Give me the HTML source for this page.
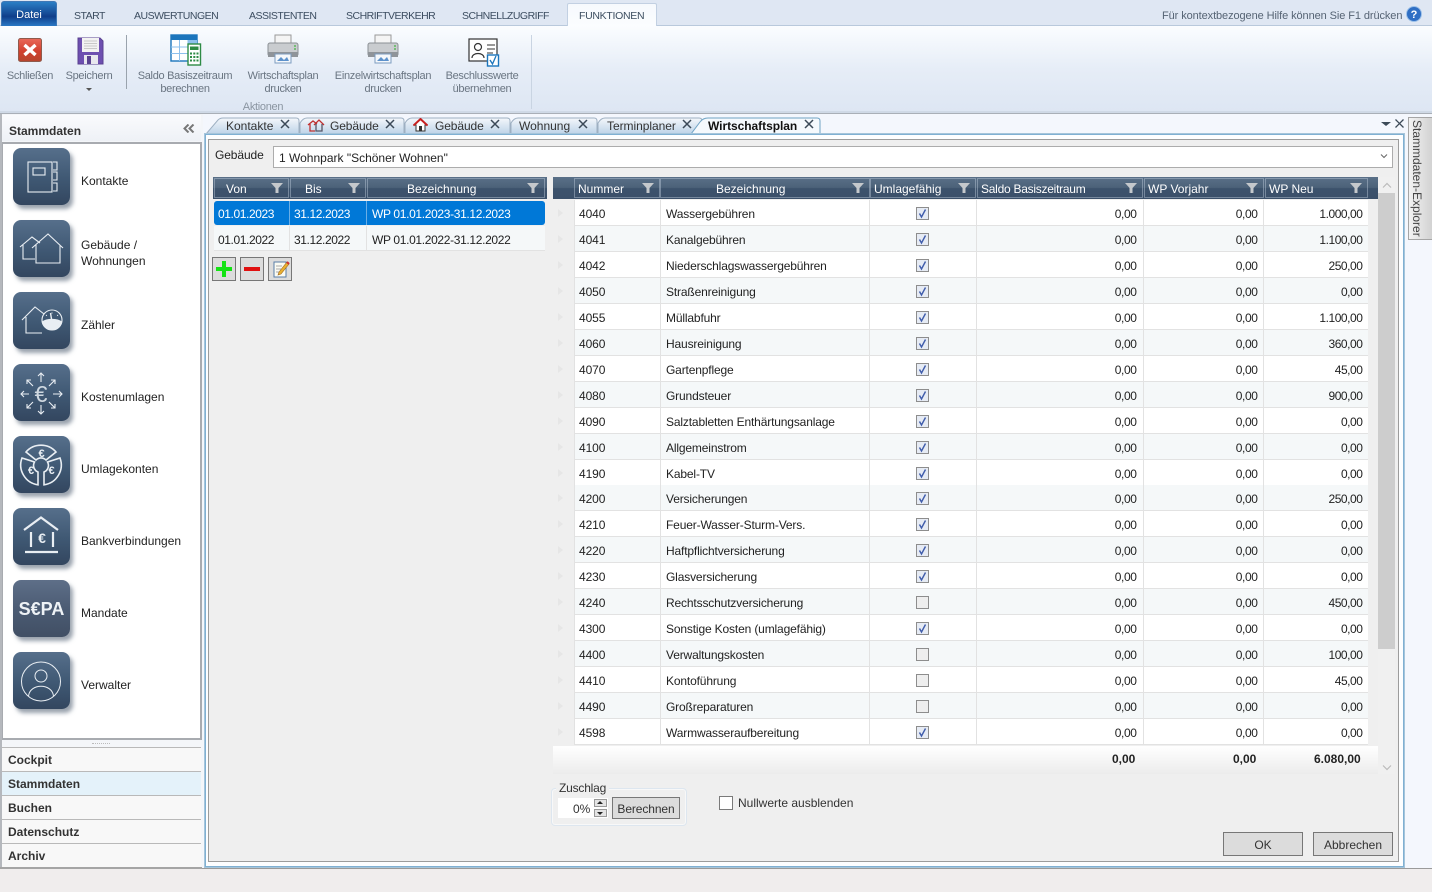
<!DOCTYPE html>
<html lang="de"><head><meta charset="utf-8"><title>Wirtschaftsplan</title>
<style>
html,body{margin:0;padding:0}
body{width:1432px;height:892px;overflow:hidden;position:relative;background:#f0eded;font:12px/16px "Liberation Sans",sans-serif;color:#222}
.a,.t{position:absolute}
.t{white-space:nowrap}
.top{font-size:10.5px;letter-spacing:-.5px;color:#3c4d60;top:8px}
.rb{font-size:11px;letter-spacing:-.3px;line-height:13px;color:#6a7582;text-align:center;white-space:nowrap;position:absolute}
.side{left:81px;color:#222;font-size:12px;line-height:16px}
.ib{position:absolute;left:13px;width:57px;height:57px;border-radius:8px;background:linear-gradient(#566f8b,#3f5873 55%,#33465f);box-shadow:3px 4px 4px rgba(70,85,105,.55);border:0}
.ib svg{position:absolute;left:0;top:0;fill:none;stroke:#e9eef3;stroke-width:1.1}
.nav{position:absolute;left:2px;width:199px;height:23px;border-bottom:1px solid #b9b9b9;background:#f8f8f8;font-weight:bold;font-size:12px;line-height:25px;text-indent:6px;color:#333}
.hd{position:absolute;top:177px;height:22px;background:linear-gradient(#5a7088,#4c6279 48%,#3c526c 52%,#3b506a)}
.hc{position:absolute;top:178px;height:20px;border:1px solid rgba(190,205,220,.45);color:#fff;font-size:12px;line-height:21px;box-sizing:border-box}
.hc span{position:absolute;white-space:nowrap}
.hc svg{position:absolute;right:5px;top:4px}
.r{position:absolute;left:574px;width:794px;height:26px;border-bottom:1px solid #e2e2e2;box-sizing:border-box;background:#fff}
.r.o{background:#f5f8f9}
.r b{position:absolute;font-weight:normal;top:6px;white-space:nowrap;color:#222;font-size:12px;letter-spacing:-.15px}
.r .n{left:5px;letter-spacing:-.1px}.d{left:92px}
.r .s{right:231.5px;letter-spacing:-.4px}.r .v{right:110.5px;letter-spacing:-.4px}.r .w{right:5.5px;letter-spacing:-.45px}
.r svg{position:absolute;left:342px;top:7px}
.ar{position:absolute;left:558px;width:0;height:0;border-left:5px solid #e6e6e6;border-top:4px solid transparent;border-bottom:4px solid transparent}
.btn{position:absolute;background:#dcdcdc;border:1px solid #777;box-sizing:border-box;text-align:center;color:#333}
.tb{font-size:12px;top:118px;color:#333}
.x{position:absolute;top:119px}
.dt{letter-spacing:-.4px}.wp{letter-spacing:-.34px}
</style></head><body>
<svg width="0" height="0" style="position:absolute"><defs>
<symbol id="f" viewBox="0 0 12 10"><path d="M0 0H12L7.5 5V10H4.5V5Z" fill="#c4c8cc"/></symbol>
<symbol id="c" viewBox="0 0 13 13"><rect x=".5" y=".5" width="12" height="12" fill="#e6ebf4" stroke="#8d8d8d"/><path d="M3.5 6.5L5.5 10L9.5 2.5" fill="none" stroke="#3f5cab" stroke-width="1.4"/></symbol>
<symbol id="u" viewBox="0 0 13 13"><rect x=".5" y=".5" width="12" height="12" fill="#eee" stroke="#8d8d8d"/></symbol>
<symbol id="k" viewBox="0 0 10 10"><path d="M1 1L9 9M9 1L1 9" stroke="#3c4a58" stroke-width="1.5" fill="none"/></symbol>
<linearGradient id="tg" x1="0" y1="0" x2="0" y2="1"><stop offset="0" stop-color="#f4f7fb"/><stop offset="1" stop-color="#bdd3e8"/></linearGradient>
</defs></svg>

<!-- top strip -->
<div class="a" style="left:0;top:0;width:1432px;height:25px;background:#dfe7f3;border-bottom:1px solid #b9c9dc"></div>
<div class="a" style="left:1px;top:1px;width:54px;height:24px;border:1px solid #3f78b5;border-radius:3px 3px 0 0;background:linear-gradient(#2a7fc5,#174f9a 45%,#0f3e8a 60%,#2a78c4);color:#fff;font-size:11px;line-height:26px;text-align:center">Datei</div>
<div class="t top" style="left:74px">START</div>
<div class="t top" style="left:134px">AUSWERTUNGEN</div>
<div class="t top" style="left:249px">ASSISTENTEN</div>
<div class="t top" style="left:346px">SCHRIFTVERKEHR</div>
<div class="t top" style="left:462px">SCHNELLZUGRIFF</div>
<div class="a" style="left:567px;top:3px;width:90px;height:23px;background:linear-gradient(#f6f9fd,#fbfdff);border:1px solid #c2d0e2;border-bottom:0;border-radius:2px 2px 0 0;box-sizing:border-box"></div>
<div class="t top" style="left:579px;letter-spacing:-.3px">FUNKTIONEN</div>
<div class="t" style="left:1162px;top:8px;font-size:11px;letter-spacing:-.09px;color:#566474">Für kontextbezogene Hilfe können Sie F1 drücken</div>
<svg class="a" style="left:1406px;top:6px" width="16" height="16"><circle cx="8" cy="8" r="7.5" fill="#2f6fc4" stroke="#9cc0e8"/><text x="8" y="12" font-size="11" font-weight="bold" fill="#fff" text-anchor="middle" font-family="Liberation Sans">?</text></svg>

<!-- ribbon -->
<div class="a" style="left:0;top:26px;width:1432px;height:86px;background:linear-gradient(#fbfdff,#e6edf7 50%,#dde6f3)"></div>
<div class="a" style="left:0;top:111px;width:1432px;height:2px;background:#cfd9e6"></div>
<div class="a" style="left:0;top:113px;width:1432px;height:1px;background:#a9afb7"></div>
<div class="a" style="left:126px;top:35px;width:1px;height:54px;background:#9aa3ad"></div>
<div class="a" style="left:531px;top:35px;width:1px;height:74px;background:#c9d4e2"></div>

<svg class="a" style="left:17px;top:37px" width="26" height="26"><defs><linearGradient id="rg" x1="0" y1="0" x2="0" y2="1"><stop offset="0" stop-color="#e9695a"/><stop offset=".55" stop-color="#d2402f"/><stop offset="1" stop-color="#b5452e"/></linearGradient></defs><rect x="1.5" y="1.5" width="23" height="23" rx="2" fill="url(#rg)" stroke="#8f5a4c"/><path d="M7.5 8L18.5 18M18.5 8L7.5 18" stroke="#fff" stroke-width="3.4"/></svg>
<svg class="a" style="left:77px;top:37px" width="27" height="28"><path d="M1 1H23L26 4V27H1Z" fill="#6d4fb0" stroke="#5a4290"/><rect x="5" y="1" width="17" height="14" fill="#f2f2f2"/><path d="M7 4H20M7 6.500H20M7 9H20M7 11.500H20" stroke="#c8c8c8"/><rect x="7" y="18" width="14" height="9" fill="#e8e8ee"/><rect x="10" y="19" width="4" height="8" fill="#5a4290"/></svg>
<div class="rb" style="left:0;top:70px;width:60px">Schließen</div>
<div class="rb" style="left:59px;top:70px;width:60px">Speichern</div>
<div class="a" style="left:86px;top:88px;width:0;height:0;border-top:3px solid #555;border-left:3px solid transparent;border-right:3px solid transparent"></div>

<svg class="a" style="left:170px;top:33px" width="32" height="33"><rect x="1" y="2" width="26" height="26" fill="#fff" stroke="#1b75bc" stroke-width="1.4"/><rect x="1" y="2" width="26" height="5" fill="#1b75bc"/><rect x="18" y="7" width="9" height="7" fill="#8dc0ec"/><path d="M1 14H27M1 20.500H27M9.500 7V28M18 7V28" stroke="#8dc0ec"/><rect x="18" y="11" width="12.500" height="21" fill="#fff" stroke="#2e8b45" stroke-width="1.4"/><rect x="20" y="13.500" width="8.500" height="3.500" fill="#2e8b45"/><path d="M20 19.500h2v2h-2zM23.300 19.500h2v2h-2zM26.500 19.500h2v2h-2zM20 23h2v2h-2zM23.300 23h2v2h-2zM26.500 23h2v2h-2zM20 26.500h2v2h-2zM23.300 26.500h2v2h-2zM26.500 26.500h2v2h-2z" fill="#2e8b45"/></svg>
<div class="rb" style="left:125px;top:70px;width:120px">Saldo Basiszeitraum<br>berechnen</div>

<svg class="a" style="left:267px;top:34px" width="32" height="30"><rect x="8" y="1" width="16" height="10" fill="#f4f4f4" stroke="#999"/><rect x="1" y="9" width="30" height="13" rx="2" fill="#c9cccf" stroke="#8a8f94"/><rect x="1" y="18" width="30" height="5" fill="#8f9499"/><rect x="8" y="20" width="16" height="9" fill="#f5f8fb" stroke="#7d9dc0"/><path d="M10 27L14 23L17 26L20 23L22 27Z" fill="#5d92cc"/><path d="M27 12h2M27 15h2" stroke="#5bb85b" stroke-width="1.400"/></svg>
<div class="rb" style="left:223px;top:70px;width:120px">Wirtschaftsplan<br>drucken</div>
<svg class="a" style="left:367px;top:34px" width="32" height="30"><rect x="8" y="1" width="16" height="10" fill="#f4f4f4" stroke="#999"/><rect x="1" y="9" width="30" height="13" rx="2" fill="#c9cccf" stroke="#8a8f94"/><rect x="1" y="18" width="30" height="5" fill="#8f9499"/><rect x="8" y="20" width="16" height="9" fill="#f5f8fb" stroke="#7d9dc0"/><path d="M10 27L14 23L17 26L20 23L22 27Z" fill="#5d92cc"/><path d="M27 12h2M27 15h2" stroke="#5bb85b" stroke-width="1.400"/></svg>
<div class="rb" style="left:323px;top:70px;width:120px">Einzelwirtschaftsplan<br>drucken</div>
<svg class="a" style="left:468px;top:38px" width="32" height="29"><rect x="1" y="1" width="28" height="22" fill="#fff" stroke="#333" stroke-width="1.200"/><circle cx="10" cy="9" r="3.500" fill="none" stroke="#333" stroke-width="1.200"/><path d="M4 20C4 14 16 14 16 20" fill="none" stroke="#333" stroke-width="1.200"/><path d="M19 7H27M19 11H27M19 15H25" stroke="#333"/><rect x="19.500" y="17" width="11" height="11" fill="#fff" stroke="#1b75bc" stroke-width="1.400"/><path d="M22 22L24.500 26L28 18" fill="none" stroke="#1b75bc" stroke-width="1.300"/></svg>
<div class="rb" style="left:422px;top:70px;width:120px">Beschlusswerte<br>übernehmen</div>
<div class="rb" style="left:203px;top:101px;width:120px;color:#8a95a1">Aktionen</div>

<!-- middle background -->
<div class="a" style="left:0;top:114px;width:1432px;height:754px;background:#f4f7fd"></div>
<div class="a" style="left:0;top:868px;width:1432px;height:24px;background:#f0eded;border-top:1px solid #9a9a9a;box-sizing:border-box"></div>

<!-- left panel -->
<div class="a" style="left:0;top:114px;width:203px;height:754px;background:#f4f6f9;border-left:2px solid #b5b8bd;box-sizing:border-box"></div>
<div class="a" style="left:2px;top:115px;width:199px;height:26px;background:linear-gradient(#fafbfd,#eef1f6)"></div>
<div class="t" style="left:9px;top:123px;font-weight:bold;font-size:12px;color:#333">Stammdaten</div>
<svg class="a" style="left:183px;top:124px" width="12" height="9"><path d="M5.500 0.500L1.500 4.500L5.500 8.500M10.500 0.500L6.500 4.500L10.500 8.500" fill="none" stroke="#777" stroke-width="2"/></svg>
<div class="a" style="left:2px;top:142px;width:200px;height:598px;background:#fff;border:1px solid #a8abb0;border-width:2px 2px 2px 1px;box-sizing:border-box"></div>

<div class="ib" style="top:148px"><svg width="57" height="57"><rect x="15" y="14" width="24" height="30"/><rect x="20" y="20" width="12" height="7"/><path d="M40 14H44V22H40M40 24H44V32H40M40 35H44V43H40"/></svg></div>
<div class="t side" style="top:173px">Kontakte</div>
<div class="ib" style="top:220px"><svg width="57" height="57"><path d="M7 27L19 17L27 23M10 25V39H22"/><path d="M19 28L35 14L50 28M23 25V43H47V25"/></svg></div>
<div class="t side" style="top:237px">Gebäude /<br>Wohnungen</div>
<div class="ib" style="top:292px"><svg width="57" height="57"><path d="M9 28L22 15L31 22M13 25V41H29"/><circle cx="39" cy="28" r="10" fill="#3f5873"/><path d="M29.300 30A10 10 0 0 0 48.700 30C44 26.500 34 26.500 29.300 30Z" fill="#e9eef3"/><path d="M39 30L37.500 21" stroke-width="1.400"/><path d="M33 23L33.800 23.800M39 20.500V21.500M45 23L44.200 23.800" stroke-width="1"/></svg></div>
<div class="t side" style="top:317px">Zähler</div>
<div class="ib" style="top:364px"><svg width="57" height="57"><text x="28" y="38" font-size="23" fill="#e9eef3" fill-opacity=".85" stroke="none" text-anchor="middle" font-family="Liberation Sans">€</text><path d="M28 9V18M25 12L28 9L31 12M28 50V41M25 47L28 50L31 47M8 30H16M11 27L8 30L11 33M49 30H40M46 27L49 30L46 33M14 16L20 22M14 20V16H18M42 16L36 22M42 20V16H38M14 44L20 38M14 40V44H18M42 44L36 38M42 40V44H38"/></svg></div>
<div class="t side" style="top:389px">Kostenumlagen</div>
<div class="ib" style="top:436px"><svg width="57" height="57" stroke-width="1.600" style="stroke-width:1.600"><path d="M13 16A20 20 0 0 1 43 16L33 24A7 7 0 0 0 23 24Z"/><path d="M47 22A20 20 0 0 1 31 48.800L31 36A7 7 0 0 0 34.500 26Z"/><path d="M9 22A20 20 0 0 0 25 48.800L25 36A7 7 0 0 1 21.500 26Z"/><text x="28.500" y="21" font-size="11" font-weight="bold" fill="#e9eef3" stroke="none" text-anchor="middle" font-family="Liberation Sans">€</text><text x="18" y="38" font-size="11" font-weight="bold" fill="#e9eef3" stroke="none" text-anchor="middle" font-family="Liberation Sans">€</text><text x="38.500" y="38" font-size="11" font-weight="bold" fill="#e9eef3" stroke="none" text-anchor="middle" font-family="Liberation Sans">€</text></svg></div>
<div class="t side" style="top:461px">Umlagekonten</div>
<div class="ib" style="top:508px"><svg width="57" height="57" style="stroke-width:2.200"><path d="M11 22L28 9.500L45 22"/><path d="M18 24V39M40 24V39M12 44H45"/><text x="29" y="35" font-size="14" font-weight="bold" fill="#e9eef3" stroke="none" text-anchor="middle" font-family="Liberation Sans">€</text></svg></div>
<div class="t side" style="top:533px">Bankverbindungen</div>
<div class="ib" style="top:580px;background:linear-gradient(#5e6f88,#4a5a72 55%,#414f64)"><svg width="57" height="57"><text x="28.500" y="35" font-size="18" font-weight="bold" fill="#eef2f6" stroke="none" text-anchor="middle" font-family="Liberation Sans">S€PA</text></svg></div>
<div class="t side" style="top:605px">Mandate</div>
<div class="ib" style="top:652px"><svg width="57" height="57" style="stroke-width:1"><circle cx="28" cy="29.500" r="19.500"/><circle cx="28" cy="24" r="6"/><path d="M15.500 44C17 31 39 31 40.500 44"/></svg></div>
<div class="t side" style="top:677px">Verwalter</div>

<div class="a" style="left:92px;top:743px;width:18px;height:0;border-top:1px dotted #bbb"></div>
<div class="a" style="left:2px;top:747px;width:199px;height:1px;background:#b9b9b9"></div>
<div class="nav" style="top:748px">Cockpit</div>
<div class="nav" style="top:772px;background:#e4f2fa">Stammdaten</div>
<div class="nav" style="top:796px">Buchen</div>
<div class="nav" style="top:820px">Datenschutz</div>
<div class="nav" style="top:844px">Archiv</div>
<div class="a" style="left:0;top:867px;width:202px;height:2px;background:#a5a5a5"></div>

<!-- doc tabs -->
<svg class="a" style="left:203px;top:115px" width="625" height="22" fill="url(#tg)" stroke="#9eb0c2">
<path d="M3 19L15 5Q17 3 20 3H93Q96 3 96 6V19Z"/>
<path d="M97 19V8Q100 3 104 3H198Q201 3 201 6V19Z"/>
<path d="M202 19V8Q205 3 209 3H304Q307 3 307 6V19Z"/>
<path d="M308 19V8Q311 3 315 3H391Q394 3 394 6V19Z"/>
<path d="M395 19V8Q398 3 402 3H496Q499 3 499 6V19Z"/>
<path d="M488 19L497 7Q500 3 505 3H614Q617 3 617 6V19H488Z" fill="#f5f9fd" stroke="#6fa3c4"/>
</svg>
<div class="t tb" style="left:226px">Kontakte</div><svg class="x" style="left:280px" width="10" height="10"><use href="#k"/></svg>
<svg class="a" style="left:307px;top:118px" width="18" height="14" fill="none" stroke="#c03030" stroke-width="1.300"><path d="M1 7L6 3L10 6M3 6V13H8"/><path d="M7 7L12 2L17 7" /><path d="M9 6V13H15V6" stroke="#556"/></svg>
<div class="t tb" style="left:330px;letter-spacing:-.1px">Gebäude</div><svg class="x" style="left:385px" width="10" height="10"><use href="#k"/></svg>
<svg class="a" style="left:413px;top:118px" width="15" height="14"><path d="M7.500 1L14 7H12V13H3V7H1Z" fill="#fff" stroke="#333"/><path d="M0.500 7.500L7.500 1L14.500 7.500" fill="none" stroke="#c82020" stroke-width="2"/><rect x="6" y="8" width="3" height="5" fill="#333"/></svg>
<div class="t tb" style="left:435px;letter-spacing:-.1px">Gebäude</div><svg class="x" style="left:490px" width="10" height="10"><use href="#k"/></svg>
<div class="t tb" style="left:519px">Wohnung</div><svg class="x" style="left:578px" width="10" height="10"><use href="#k"/></svg>
<div class="t tb" style="left:607px;letter-spacing:-.05px">Terminplaner</div><svg class="x" style="left:682px" width="10" height="10"><use href="#k"/></svg>
<div class="t tb" style="left:708px;font-weight:bold;color:#111;letter-spacing:-.05px">Wirtschaftsplan</div><svg class="x" style="left:804px" width="10" height="10"><use href="#k"/></svg>
<div class="a" style="left:1381px;top:122px;width:0;height:0;border-top:4px solid #3c4a58;border-left:5px solid transparent;border-right:5px solid transparent"></div>
<svg class="a" style="left:1395px;top:119px" width="9" height="9"><path d="M.5 .5L8.500 8.500M8.500 .5L.5 8.500" stroke="#3c4a58" stroke-width="1.300"/></svg>

<!-- doc frame -->
<div class="a" style="left:204px;top:133px;width:1201px;height:735px;background:#fdfeff;border:2px solid #7fb0d3;box-sizing:border-box;outline:1px solid #a6c5da;outline-offset:-1px"></div>
<div class="a" style="left:208px;top:139px;width:1191px;height:723px;background:#efefef;border:1px solid #9c9c9c;box-sizing:border-box"></div>

<div class="t" style="left:215px;top:147px;color:#222;letter-spacing:-.1px">Gebäude</div>
<div class="a" style="left:273px;top:146px;width:1120px;height:22px;background:#fff;border:1px solid #acacac;box-sizing:border-box"></div>
<div class="t" style="left:279px;top:150px;color:#222">1 Wohnpark "Schöner Wohnen"</div>
<svg class="a" style="left:1380px;top:153px" width="8" height="6"><path d="M1 1.500L4 4.500L7 1.500" fill="none" stroke="#666"/></svg>

<!-- left grid -->
<div class="hd" style="left:213px;width:334px"></div>
<div class="hc" style="left:214px;width:75px"><span style="left:11px">Von</span><svg width="12" height="10"><use href="#f"/></svg></div>
<div class="hc" style="left:290px;width:76px"><span style="left:14px">Bis</span><svg width="12" height="10"><use href="#f"/></svg></div>
<div class="hc" style="left:367px;width:178px"><span style="left:39px">Bezeichnung</span><svg width="12" height="10"><use href="#f"/></svg></div>
<div class="a" style="left:214px;top:201px;width:331px;height:24px;background:#0078d7;border-radius:3px"></div>
<div class="a" style="left:289px;top:201px;width:1px;height:24px;background:#6aaee6"></div>
<div class="a" style="left:366px;top:201px;width:1px;height:24px;background:#6aaee6"></div>
<div class="t dt" style="left:218px;top:206px;color:#fff">01.01.2023</div>
<div class="t dt" style="left:294px;top:206px;color:#fff">31.12.2023</div>
<div class="t wp" style="left:372px;top:206px;color:#fff">WP 01.01.2023-31.12.2023</div>
<div class="a" style="left:214px;top:226px;width:331px;height:25px;background:#f5f8f9;border-bottom:1px solid #e2e2e2;box-sizing:border-box"></div>
<div class="a" style="left:289px;top:226px;width:1px;height:25px;background:#e2e2e2"></div>
<div class="a" style="left:366px;top:226px;width:1px;height:25px;background:#e2e2e2"></div>
<div class="t dt" style="left:218px;top:232px">01.01.2022</div>
<div class="t dt" style="left:294px;top:232px">31.12.2022</div>
<div class="t wp" style="left:372px;top:232px">WP 01.01.2022-31.12.2022</div>

<div class="btn" style="left:212px;top:257px;width:24px;height:24px"><svg width="22" height="22" style="display:block"><path d="M11 3V19M3 11H19" stroke="#14e314" stroke-width="4"/></svg></div>
<div class="btn" style="left:240px;top:257px;width:24px;height:24px"><svg width="22" height="22" style="display:block"><path d="M3 11H19" stroke="#e01010" stroke-width="4"/></svg></div>
<div class="btn" style="left:268px;top:257px;width:24px;height:24px"><svg width="22" height="22" style="display:block"><rect x="5" y="4" width="12" height="15" fill="#fbfbf2" stroke="#5a7ea8"/><path d="M7 8H13M7 11H12M7 14H11" stroke="#aaa"/><path d="M10 14L18 4L20 6L12 16L9 17Z" fill="#e8b030" stroke="#a06820" stroke-width=".6"/><path d="M18 4L20 6" stroke="#d03030" stroke-width="2"/></svg></div>

<!-- main grid -->
<div class="hd" style="left:553px;width:825px"></div>
<div class="hc" style="left:574px;width:86px"><span style="left:3px">Nummer</span><svg width="12" height="10"><use href="#f"/></svg></div>
<div class="hc" style="left:660px;width:210px"><span style="left:55px">Bezeichnung</span><svg width="12" height="10"><use href="#f"/></svg></div>
<div class="hc" style="left:870px;width:106px"><span style="left:3px">Umlagefähig</span><svg width="12" height="10"><use href="#f"/></svg></div>
<div class="hc" style="left:977px;width:166px"><span style="left:3px;letter-spacing:-.26px">Saldo Basiszeitraum</span><svg width="12" height="10"><use href="#f"/></svg></div>
<div class="hc" style="left:1144px;width:120px"><span style="left:3px">WP Vorjahr</span><svg width="12" height="10"><use href="#f"/></svg></div>
<div class="hc" style="left:1265px;width:103px"><span style="left:3px">WP Neu</span><svg width="12" height="10"><use href="#f"/></svg></div>
<div class="a" style="left:553px;top:200px;width:21px;height:546px;background:#efefef"></div>
<div class="a" style="left:1368px;top:199px;width:10px;height:547px;background:#efefef"></div>

<div class="r" style="top:200px"><b class="n">4040</b><b class="d">Wassergebühren</b><svg width="13" height="13"><use href="#c"/></svg><b class="s">0,00</b><b class="v">0,00</b><b class="w">1.000,00</b></div>
<div class="r o" style="top:226px"><b class="n">4041</b><b class="d">Kanalgebühren</b><svg width="13" height="13"><use href="#c"/></svg><b class="s">0,00</b><b class="v">0,00</b><b class="w">1.100,00</b></div>
<div class="r" style="top:252px"><b class="n">4042</b><b class="d">Niederschlagswassergebühren</b><svg width="13" height="13"><use href="#c"/></svg><b class="s">0,00</b><b class="v">0,00</b><b class="w">250,00</b></div>
<div class="r o" style="top:278px"><b class="n">4050</b><b class="d">Straßenreinigung</b><svg width="13" height="13"><use href="#c"/></svg><b class="s">0,00</b><b class="v">0,00</b><b class="w">0,00</b></div>
<div class="r" style="top:304px"><b class="n">4055</b><b class="d">Müllabfuhr</b><svg width="13" height="13"><use href="#c"/></svg><b class="s">0,00</b><b class="v">0,00</b><b class="w">1.100,00</b></div>
<div class="r o" style="top:330px"><b class="n">4060</b><b class="d">Hausreinigung</b><svg width="13" height="13"><use href="#c"/></svg><b class="s">0,00</b><b class="v">0,00</b><b class="w">360,00</b></div>
<div class="r" style="top:356px"><b class="n">4070</b><b class="d">Gartenpflege</b><svg width="13" height="13"><use href="#c"/></svg><b class="s">0,00</b><b class="v">0,00</b><b class="w">45,00</b></div>
<div class="r o" style="top:382px"><b class="n">4080</b><b class="d">Grundsteuer</b><svg width="13" height="13"><use href="#c"/></svg><b class="s">0,00</b><b class="v">0,00</b><b class="w">900,00</b></div>
<div class="r" style="top:408px"><b class="n">4090</b><b class="d">Salztabletten Enthärtungsanlage</b><svg width="13" height="13"><use href="#c"/></svg><b class="s">0,00</b><b class="v">0,00</b><b class="w">0,00</b></div>
<div class="r o" style="top:434px"><b class="n">4100</b><b class="d">Allgemeinstrom</b><svg width="13" height="13"><use href="#c"/></svg><b class="s">0,00</b><b class="v">0,00</b><b class="w">0,00</b></div>
<div class="r" style="top:460px"><b class="n">4190</b><b class="d">Kabel-TV</b><svg width="13" height="13"><use href="#c"/></svg><b class="s">0,00</b><b class="v">0,00</b><b class="w">0,00</b></div>
<div class="r o" style="top:485px"><b class="n">4200</b><b class="d">Versicherungen</b><svg width="13" height="13"><use href="#c"/></svg><b class="s">0,00</b><b class="v">0,00</b><b class="w">250,00</b></div>
<div class="r" style="top:511px"><b class="n">4210</b><b class="d">Feuer-Wasser-Sturm-Vers.</b><svg width="13" height="13"><use href="#c"/></svg><b class="s">0,00</b><b class="v">0,00</b><b class="w">0,00</b></div>
<div class="r o" style="top:537px"><b class="n">4220</b><b class="d">Haftpflichtversicherung</b><svg width="13" height="13"><use href="#c"/></svg><b class="s">0,00</b><b class="v">0,00</b><b class="w">0,00</b></div>
<div class="r" style="top:563px"><b class="n">4230</b><b class="d">Glasversicherung</b><svg width="13" height="13"><use href="#c"/></svg><b class="s">0,00</b><b class="v">0,00</b><b class="w">0,00</b></div>
<div class="r o" style="top:589px"><b class="n">4240</b><b class="d">Rechtsschutzversicherung</b><svg width="13" height="13"><use href="#u"/></svg><b class="s">0,00</b><b class="v">0,00</b><b class="w">450,00</b></div>
<div class="r" style="top:615px"><b class="n">4300</b><b class="d">Sonstige Kosten (umlagefähig)</b><svg width="13" height="13"><use href="#c"/></svg><b class="s">0,00</b><b class="v">0,00</b><b class="w">0,00</b></div>
<div class="r o" style="top:641px"><b class="n">4400</b><b class="d">Verwaltungskosten</b><svg width="13" height="13"><use href="#u"/></svg><b class="s">0,00</b><b class="v">0,00</b><b class="w">100,00</b></div>
<div class="r" style="top:667px"><b class="n">4410</b><b class="d">Kontoführung</b><svg width="13" height="13"><use href="#u"/></svg><b class="s">0,00</b><b class="v">0,00</b><b class="w">45,00</b></div>
<div class="r o" style="top:693px"><b class="n">4490</b><b class="d">Großreparaturen</b><svg width="13" height="13"><use href="#u"/></svg><b class="s">0,00</b><b class="v">0,00</b><b class="w">0,00</b></div>
<div class="r" style="top:719px"><b class="n">4598</b><b class="d">Warmwasseraufbereitung</b><svg width="13" height="13"><use href="#c"/></svg><b class="s">0,00</b><b class="v">0,00</b><b class="w">0,00</b></div>

<!-- column separators -->
<div class="a" style="left:574px;top:200px;width:1px;height:545px;background:#e2e2e2"></div>
<div class="a" style="left:660px;top:200px;width:1px;height:545px;background:#e2e2e2"></div>
<div class="a" style="left:869px;top:200px;width:1px;height:545px;background:#e2e2e2"></div>
<div class="a" style="left:976px;top:200px;width:1px;height:545px;background:#e2e2e2"></div>
<div class="a" style="left:1143px;top:200px;width:1px;height:545px;background:#e2e2e2"></div>
<div class="a" style="left:1263px;top:200px;width:1px;height:545px;background:#e2e2e2"></div>

<div class="ar" style="top:209px"></div><div class="ar" style="top:235px"></div><div class="ar" style="top:261px"></div><div class="ar" style="top:287px"></div><div class="ar" style="top:313px"></div><div class="ar" style="top:339px"></div><div class="ar" style="top:365px"></div><div class="ar" style="top:391px"></div><div class="ar" style="top:417px"></div><div class="ar" style="top:443px"></div><div class="ar" style="top:469px"></div><div class="ar" style="top:494px"></div><div class="ar" style="top:520px"></div><div class="ar" style="top:546px"></div><div class="ar" style="top:572px"></div><div class="ar" style="top:598px"></div><div class="ar" style="top:624px"></div><div class="ar" style="top:650px"></div><div class="ar" style="top:676px"></div><div class="ar" style="top:702px"></div><div class="ar" style="top:728px"></div>

<div class="a" style="left:553px;top:746px;width:825px;height:28px;background:linear-gradient(#fff,#ececec)"></div>
<div class="t" style="left:1112px;top:751px;font-weight:bold">0,00</div>
<div class="t" style="left:1233px;top:751px;font-weight:bold">0,00</div>
<div class="t" style="left:1314px;top:751px;font-weight:bold">6.080,00</div>

<!-- scrollbar -->
<div class="a" style="left:1378px;top:177px;width:17px;height:597px;background:#f0f0f0"></div>
<div class="a" style="left:1378px;top:193px;width:17px;height:456px;background:#cdcdcd"></div>
<svg class="a" style="left:1382px;top:182px" width="10" height="7"><path d="M1 5.500L5 1.500L9 5.500" fill="none" stroke="#bbb" stroke-width="1.200"/></svg>
<svg class="a" style="left:1382px;top:764px" width="10" height="7"><path d="M1 1.500L5 5.500L9 1.500" fill="none" stroke="#bbb" stroke-width="1.200"/></svg>

<!-- bottom -->
<div class="a" style="left:551px;top:788px;width:136px;height:38px;border:1px solid #dde6ef;border-radius:4px;box-sizing:border-box;box-shadow:inset 0 0 0 1px #f8f8f8"></div>
<div class="t" style="left:556px;top:780px;background:#efefef;padding:0 3px;color:#333;letter-spacing:-.2px">Zuschlag</div>
<div class="a" style="left:558px;top:798px;width:50px;height:20px;background:#fff"></div>
<div class="t" style="left:573px;top:801px;color:#333">0%</div>
<div class="a" style="left:594px;top:799px;width:13px;height:8px;background:#e4e4e4;border:1px solid #999;box-sizing:border-box"></div>
<div class="a" style="left:594px;top:809px;width:13px;height:8px;background:#e4e4e4;border:1px solid #999;box-sizing:border-box"></div>
<div class="a" style="left:597px;top:801px;width:0;height:0;border-bottom:3px solid #222;border-left:3px solid transparent;border-right:3px solid transparent"></div>
<div class="a" style="left:597px;top:812px;width:0;height:0;border-top:3px solid #222;border-left:3px solid transparent;border-right:3px solid transparent"></div>
<div class="btn" style="left:612px;top:797px;width:68px;height:22px;line-height:22px;letter-spacing:-.1px">Berechnen</div>
<div class="a" style="left:719px;top:796px;width:14px;height:14px;background:#fff;border:1px solid #7a7a7a;box-sizing:border-box"></div>
<div class="t" style="left:738px;top:795px;color:#333">Nullwerte ausblenden</div>
<div class="btn" style="left:1223px;top:832px;width:80px;height:24px;line-height:25px">OK</div>
<div class="btn" style="left:1313px;top:832px;width:80px;height:24px;line-height:25px">Abbrechen</div>

<!-- explorer tab -->
<div class="a" style="left:1408px;top:117px;width:24px;height:123px;background:linear-gradient(90deg,#f3f3f3,#d2d2d2);border:1px solid #a5a5a5;border-right:0;box-sizing:border-box"></div>
<div class="t" style="left:1410px;top:120px;writing-mode:vertical-rl;color:#444;font-size:12px;line-height:14px">Stammdaten-Explorer</div>
</body></html>
